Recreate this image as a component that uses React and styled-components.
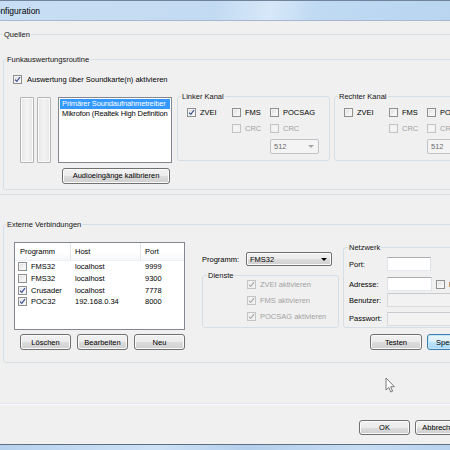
import React from "react";
import styled, { createGlobalStyle } from "styled-components";

const GlobalStyle = createGlobalStyle`
  html, body {
    margin: 0;
    padding: 0;
    background: #f0f0f0;
    overflow: hidden;
  }
  body {
    font-family: "Liberation Sans", Arial, sans-serif;
    font-size: 7.5px;
    color: #000;
  }
`;

const Window = styled.div`
  position: relative;
  width: 450px;
  height: 450px;
  overflow: hidden;
  display: flex;
  flex-direction: column;
  background: #f0f0f0;
`;

const TitleBar = styled.div`
  height: 19px;
  flex-shrink: 0;
  border-top: 1px solid #71849b;
  border-bottom: 1px solid #a6b8cc;
  background: linear-gradient(100deg, #c8def4 0%, #c3dbf2 48%, #d6e8f9 60%, #c0daf3 70%, #b9d5f0 100%);
  display: flex;
  align-items: center;
  font-size: 8.5px;
  white-space: nowrap;
  overflow: hidden;
`;

const TitleText = styled.span`
  margin-left: -10px;
`;

const Client = styled.div`
  flex: 1;
  display: flex;
  flex-direction: column;
  align-items: flex-start;
  min-height: 0;
`;

const BottomFrame = styled.div`
  height: 5px;
  flex-shrink: 0;
  border-top: 1px solid #5f6f82;
  background: linear-gradient(90deg, #b7d2ee 0%, #cde1f6 35%, #b4cfec 55%, #c6dcf3 80%, #b9d3ee 100%);
`;

const Group = styled.fieldset`
  box-sizing: border-box;
  flex-shrink: 0;
  margin: ${(p) => p.$mt || 0}px 0 0 ${(p) => p.$ml || 0}px;
  padding: 0;
  min-inline-size: 0;
  width: ${(p) => p.$w}px;
  height: ${(p) => p.$h}px;
  border: 1px solid #d5dfe5;
  border-radius: 3px;
`;

const Legend = styled.legend`
  padding: 0 1px;
  margin-left: ${(p) => p.$indent}px;
  line-height: 9px;
  font-size: 7.5px;
  color: #141414;
`;

const Box = styled.span`
  box-sizing: border-box;
  width: 9px;
  height: 9px;
  flex-shrink: 0;
  display: inline-flex;
  align-items: center;
  justify-content: center;
  border: 1px solid ${(p) => (p.$disabled ? "#c4c4c4" : "#8e8f8f")};
  background: ${(p) =>
    p.$disabled ? "#f4f4f4" : "linear-gradient(135deg, #d9d9d9 0%, #f3f3f3 60%, #ffffff 100%)"};
  box-shadow: inset 0 0 0 1px ${(p) => (p.$disabled ? "#f0f0f0" : "#f4f4f4")};
`;

const CheckLabel = styled.label`
  display: flex;
  align-items: center;
  gap: ${(p) => p.$gap || 4}px;
  margin-left: ${(p) => p.$ml || 0}px;
  white-space: nowrap;
  color: ${(p) => (p.$disabled ? "#a2a2a2" : "#000")};
`;

function CheckBox({ checked, disabled }) {
  return (
    <Box $disabled={disabled}>
      {checked && (
        <svg width="7" height="7" viewBox="0 0 7 7">
          <path
            d="M1 3.6 L2.8 5.4 L6 1.2"
            fill="none"
            stroke={disabled ? "#a9a9a9" : "#3d5393"}
            strokeWidth="1.2"
          />
        </svg>
      )}
    </Box>
  );
}

function Check({ children, checked, disabled, gap, ml }) {
  return (
    <CheckLabel $disabled={disabled} $gap={gap} $ml={ml}>
      <CheckBox checked={checked} disabled={disabled} />
      {children}
    </CheckLabel>
  );
}

const Button = styled.div`
  box-sizing: border-box;
  flex-shrink: 0;
  width: ${(p) => p.$w}px;
  height: ${(p) => p.$h || 16}px;
  margin-left: ${(p) => p.$ml || 0}px;
  margin-top: ${(p) => p.$mt || 0}px;
  display: flex;
  align-items: center;
  justify-content: center;
  border: 1px solid ${(p) => (p.$default ? "#3c7fb1" : "#707070")};
  border-radius: 3px;
  background: ${(p) =>
    p.$default
      ? "linear-gradient(#eaf6fd 0%, #d9f0fc 50%, #bee6fd 50%, #a7d9f5 100%)"
      : "linear-gradient(#f2f2f2 0%, #ebebeb 50%, #dddddd 50%, #cfcfcf 100%)"};
  box-shadow: inset 0 0 0 1px ${(p) => (p.$default ? "#c5e6f8" : "#fbfbfb")};
  white-space: nowrap;
`;

const ButtonRow = styled.div`
  display: flex;
  gap: ${(p) => p.$gap || 6}px;
  margin-top: ${(p) => p.$mt || 0}px;
  margin-left: ${(p) => p.$ml || 0}px;
`;

const Combo = styled.div`
  box-sizing: border-box;
  flex-shrink: 0;
  width: ${(p) => p.$w}px;
  height: ${(p) => p.$h}px;
  margin-top: ${(p) => p.$mt || 0}px;
  display: flex;
  align-items: center;
  justify-content: space-between;
  padding: 0 4px 0 3px;
  border: 1px solid ${(p) => (p.$disabled ? "#c0c4c8" : "#707070")};
  border-radius: 2px;
  color: ${(p) => (p.$disabled ? "#6d6d6d" : "#000")};
  background: ${(p) =>
    p.$disabled ? "#f4f4f4" : "linear-gradient(#f2f2f2 0%, #ebebeb 50%, #dddddd 50%, #cfcfcf 100%)"};
  box-shadow: inset 0 0 0 1px ${(p) => (p.$disabled ? "#f4f4f4" : "#fbfbfb")};
`;

const Arrow = styled.span`
  width: 0;
  height: 0;
  border-left: 3px solid transparent;
  border-right: 3px solid transparent;
  border-top: 3px solid ${(p) => (p.$disabled ? "#a6a6a6" : "#000")};
`;

/* Quellen */

const CheckRow = styled.div`
  height: 9px;
  margin: ${(p) => p.$mt}px 0 0 ${(p) => p.$ml}px;
  display: flex;
  align-items: center;
`;

const SourceRow = styled.div`
  display: flex;
  align-items: flex-start;
  margin: 8.5px 0 0 16px;
`;

const InputColumn = styled.div`
  width: 152px;
  margin-top: 4.5px;
  display: flex;
  flex-direction: column;
`;

const InputTop = styled.div`
  display: flex;
  gap: 3px;
`;

const Meter = styled.div`
  box-sizing: border-box;
  width: 14px;
  height: 66px;
  border: 1px solid #b4b4b4;
  border-radius: 1px;
  background: linear-gradient(90deg, #e6e6e6 0%, #f4f4f4 50%, #e6e6e6 100%);
  box-shadow: inset 0 0 0 1px #fbfbfb;
`;

const DeviceList = styled.div`
  box-sizing: border-box;
  width: 114px;
  height: 66px;
  margin-left: 4px;
  padding: 1px;
  border: 1px solid #828790;
  background: #fff;
`;

const DeviceItem = styled.div`
  height: 10px;
  line-height: 10px;
  padding-left: 2px;
  letter-spacing: -0.12px;
  white-space: nowrap;
  overflow: hidden;
  background: ${(p) => (p.$selected ? "#3399ff" : "transparent")};
  color: ${(p) => (p.$selected ? "#fff" : "#000")};
`;

const ChannelGrid = styled.div`
  display: grid;
  grid-template-columns: 45px 38px 1fr;
  grid-template-rows: 16px 16px auto;
  align-items: center;
  padding: 3px 0 0 9px;
`;

/* Externe Verbindungen */

const ExtRow = styled.div`
  display: flex;
  align-items: flex-start;
`;

const ExtColumn = styled.div`
  display: flex;
  flex-direction: column;
  flex-shrink: 0;
  margin: ${(p) => p.$mt}px 0 0 ${(p) => p.$ml}px;
`;

const ListView = styled.div`
  box-sizing: border-box;
  width: 171px;
  height: 88px;
  border: 1px solid #828790;
  background: #fff;
`;

const LvHead = styled.div`
  display: grid;
  grid-template-columns: 56px 70px 1fr;
  height: 18px;
  background: linear-gradient(#ffffff 0%, #ffffff 55%, #f6f7f9 100%);
  border-bottom: 1px solid #eef0f3;
  box-sizing: border-box;
`;

const LvHeadCell = styled.div`
  display: flex;
  align-items: center;
  padding-left: ${(p) => p.$pl}px;
  border-right: ${(p) => (p.$sep ? "1px solid #e3e6ea" : "none")};
`;

const LvRow = styled.div`
  display: grid;
  grid-template-columns: 56px 70px 1fr;
  height: 11.7px;
  align-items: center;
  white-space: nowrap;
`;

const LvCell = styled.div`
  display: flex;
  align-items: center;
  padding-left: ${(p) => p.$pl}px;
`;

const ProgRow = styled.div`
  display: flex;
  align-items: center;
  height: 14px;
`;

const FieldLabel = styled.span`
  width: ${(p) => p.$w}px;
  flex-shrink: 0;
  white-space: nowrap;
`;

const ServiceList = styled.div`
  display: flex;
  flex-direction: column;
  margin: -3.5px 0 0 44px;
`;

const ServiceItem = styled.div`
  height: 16px;
  display: flex;
  align-items: center;
`;

const NetRow = styled.div`
  display: flex;
  align-items: center;
  height: 14px;
  margin: ${(p) => p.$mt}px 0 0 5px;
`;

const TextBox = styled.div`
  box-sizing: border-box;
  flex-shrink: 0;
  width: ${(p) => p.$w}px;
  height: 14px;
  border: 1px solid;
  border-color: ${(p) =>
    p.$disabled ? "#c8cbcf #d6d9dd #d9dcdf #d6d9dd" : "#abadb3 #dbdfe6 #e3e9ef #e2e3ea"};
  background: ${(p) => (p.$disabled ? "#f2f2f2" : "#fff")};
`;

const Separator = styled.div`
  align-self: stretch;
  height: 0;
  margin-top: 40px;
  border-top: 1px solid #e2e6ea;
  border-bottom: 1px solid #f8f9fa;
`;

const Footer = styled.div`
  display: flex;
  gap: 5px;
  margin: 15px 0 0 359px;
`;

const Cursor = styled.svg`
  position: absolute;
  left: 385px;
  top: 377px;
`;

const connections = [
  { prog: "FMS32", host: "localhost", port: "9999", on: false },
  { prog: "FMS32", host: "localhost", port: "9300", on: false },
  { prog: "Crusader", host: "localhost", port: "7778", on: true },
  { prog: "POC32", host: "192.168.0.34", port: "8000", on: true },
];

function Channel({ title, ml, zvei }) {
  return (
    <Group $w={153} $h={69} $ml={ml}>
      <Legend $indent={3}>{title}</Legend>
      <ChannelGrid>
        <Check checked={zvei}>ZVEI</Check>
        <Check>FMS</Check>
        <Check>POCSAG</Check>
        <span />
        <Check disabled>CRC</Check>
        <Check disabled>CRC</Check>
        <span />
        <span />
        <Combo $w={49} $h={15} $mt={2.5} $disabled>
          512
          <Arrow $disabled />
        </Combo>
      </ChannelGrid>
    </Group>
  );
}

export default function App() {
  return (
    <Window>
      <GlobalStyle />
      <TitleBar>
        <TitleText>Konfiguration</TitleText>
      </TitleBar>
      <Client>
        <Group $mt={9} $ml={-4} $w={470} $h={165}>
          <Legend $indent={6}>Quellen</Legend>
          <Group $mt={16} $ml={6} $w={470} $h={134.5}>
            <Legend $indent={2}>Funkauswertungsroutine</Legend>
            <CheckRow $mt={10.5} $ml={9}>
              <Check checked gap={5}>
                Auswertung über Soundkarte(n) aktivieren
              </Check>
            </CheckRow>
            <SourceRow>
              <InputColumn>
                <InputTop>
                  <Meter />
                  <Meter />
                  <DeviceList>
                    <DeviceItem $selected>Primärer Soundaufnahmetreiber</DeviceItem>
                    <DeviceItem>Mikrofon (Realtek High Definition</DeviceItem>
                  </DeviceList>
                </InputTop>
                <Button $w={108} $ml={42} $mt={5}>
                  Audioeingänge kalibrieren
                </Button>
              </InputColumn>
              <Channel title="Linker Kanal" ml={5} zvei />
              <Channel title="Rechter Kanal" ml={4} />
            </SourceRow>
          </Group>
        </Group>

        <Group $mt={24.5} $ml={3} $w={470} $h={143.5}>
          <Legend $indent={2}>Externe Verbindungen</Legend>
          <ExtRow>
            <ExtColumn $mt={13.5} $ml={10}>
              <ListView>
                <LvHead>
                  <LvHeadCell $pl={5} $sep>Programm</LvHeadCell>
                  <LvHeadCell $pl={4} $sep>Host</LvHeadCell>
                  <LvHeadCell $pl={4}>Port</LvHeadCell>
                </LvHead>
                {connections.map((c, i) => (
                  <LvRow key={`conn-${i}`}>
                    <LvCell $pl={3}>
                      <Check checked={c.on}>{c.prog}</Check>
                    </LvCell>
                    <LvCell $pl={4}>{c.host}</LvCell>
                    <LvCell $pl={4}>{c.port}</LvCell>
                  </LvRow>
                ))}
              </ListView>
              <ButtonRow $mt={4} $ml={6}>
                <Button $w={51}>Löschen</Button>
                <Button $w={51}>Bearbeiten</Button>
                <Button $w={51}>Neu</Button>
              </ButtonRow>
            </ExtColumn>

            <ExtColumn $mt={23.5} $ml={17}>
              <ProgRow>
                <FieldLabel $w={44}>Programm:</FieldLabel>
                <Combo $w={86} $h={14}>
                  FMS32
                  <Arrow />
                </Combo>
              </ProgRow>
              <Group $mt={4.5} $w={137} $h={57.5}>
                <Legend $indent={4}>Dienste</Legend>
                <ServiceList>
                  <ServiceItem>
                    <Check checked disabled>ZVEI aktivieren</Check>
                  </ServiceItem>
                  <ServiceItem>
                    <Check checked disabled>FMS aktivieren</Check>
                  </ServiceItem>
                  <ServiceItem>
                    <Check checked disabled>POCSAG aktivieren</Check>
                  </ServiceItem>
                </ServiceList>
              </Group>
            </ExtColumn>

            <ExtColumn $mt={14} $ml={4}>
              <Group $w={150} $h={85.5}>
                <Legend $indent={4}>Netzwerk</Legend>
                <NetRow $mt={5.5}>
                  <FieldLabel $w={38}>Port:</FieldLabel>
                  <TextBox $w={44} />
                </NetRow>
                <NetRow $mt={6}>
                  <FieldLabel $w={38}>Adresse:</FieldLabel>
                  <TextBox $w={45} />
                  <Check ml={4}>Lokal</Check>
                </NetRow>
                <NetRow $mt={2}>
                  <FieldLabel $w={38}>Benutzer:</FieldLabel>
                  <TextBox $w={110} $disabled />
                </NetRow>
                <NetRow $mt={4.5}>
                  <FieldLabel $w={38}>Passwort:</FieldLabel>
                  <TextBox $w={110} $disabled />
                </NetRow>
              </Group>
              <ButtonRow $mt={6} $ml={27} $gap={5}>
                <Button $w={52}>Testen</Button>
                <Button $w={52} $default>
                  Speichern
                </Button>
              </ButtonRow>
            </ExtColumn>
          </ExtRow>
        </Group>

        <Separator />

        <Footer>
          <Button $w={51} $h={15}>OK</Button>
          <Button $w={51} $h={15}>Abbrechen</Button>
        </Footer>
      </Client>
      <BottomFrame />

      <Cursor width="11" height="17" viewBox="0 0 11 17">
        <path
          d="M1 1 L1 13 L3.8 10.4 L5.8 15 L7.6 14.2 L5.7 9.7 L9.4 9.7 Z"
          fill="#fff"
          stroke="#7a7a7a"
          strokeWidth="1"
          strokeLinejoin="round"
        />
      </Cursor>
    </Window>
  );
}
